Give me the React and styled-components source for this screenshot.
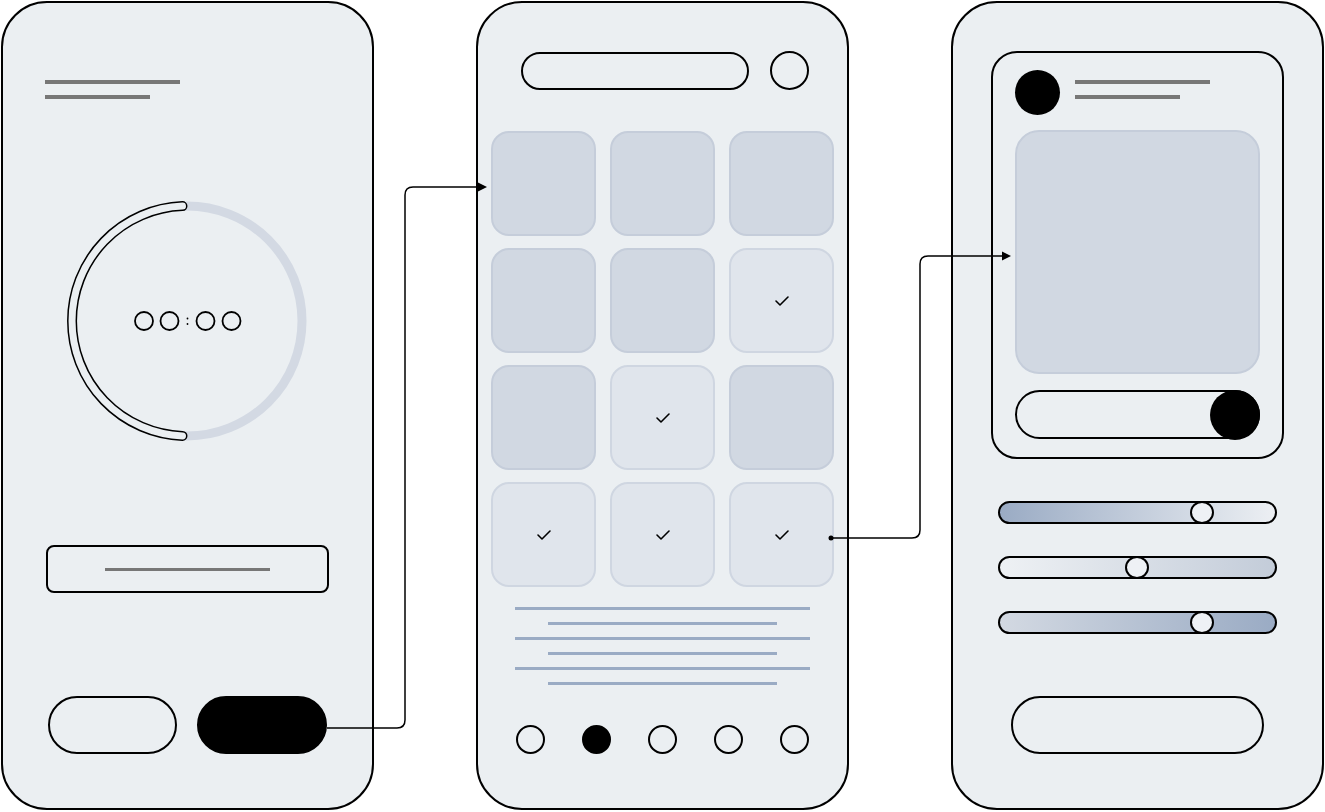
import React from "react";
import styled, { createGlobalStyle } from "styled-components";

const Global = createGlobalStyle`
  html, body { margin: 0; padding: 0; background: #ffffff; }
  body { font-family: "Liberation Sans", Arial, sans-serif; }
  * { box-sizing: border-box; }
`;

const BG = "#ebeff2";
const TILE = "#d1d8e2";
const TILE_BORDER = "#c5cdda";
const TILE_LIGHT = "#e0e5ec";
const TILE_LIGHT_BORDER = "#cfd6e1";
const GREY = "#777777";
const BLUE = "#9aabc4";

const Canvas = styled.div`
  position: relative;
  display: flex;
  gap: 102px;
  padding: 1px;
  width: 1325px;
  height: 812px;
`;

const Phone = styled.div`
  width: 373px;
  height: 809px;
  border: 2px solid #000;
  border-radius: 46px;
  background: ${BG};
  display: flex;
  flex-direction: column;
  align-items: center;
`;

/* ---------- phone 1 ---------- */
const Header = styled.div`
  align-self: stretch;
  display: flex;
  flex-direction: column;
  gap: 11px;
  margin-top: ${(p) => p.$top}px;
  padding-left: ${(p) => p.$left}px;
`;

const Bar = styled.div`
  width: ${(p) => p.$w}px;
  height: ${(p) => p.$h || 4}px;
  background: ${(p) => p.$color || GREY};
`;

const Dial = styled.svg`
  display: block;
  margin-top: 102px;
  margin-right: 1px;
  width: 240px;
  height: 240px;
`;

const InputBox = styled.div`
  margin-top: 104px;
  width: 283px;
  height: 48px;
  border: 2px solid #000;
  border-radius: 8px;
  display: flex;
  align-items: center;
  justify-content: center;
`;

const ButtonRow = styled.div`
  margin-top: 103px;
  display: flex;
  gap: 20px;
`;

const PillButton = styled.div`
  width: ${(p) => p.$w}px;
  height: 58px;
  border-radius: 29px;
  border: 2px solid #000;
  background: ${(p) => (p.$filled ? "#000" : "transparent")};
`;

/* ---------- phone 2 ---------- */
const SearchRow = styled.div`
  align-self: stretch;
  margin-top: 48px;
  padding-left: 43px;
  display: flex;
  align-items: center;
  gap: 21px;
`;

const SearchPill = styled.div`
  width: 228px;
  height: 38px;
  border: 2px solid #000;
  border-radius: 19px;
`;

const RoundButton = styled.div`
  width: 39px;
  height: 39px;
  border: 2px solid #000;
  border-radius: 50%;
`;

const Grid = styled.div`
  margin-top: 41px;
  display: grid;
  grid-template-columns: repeat(3, 105px);
  grid-auto-rows: 105px;
  column-gap: 14px;
  row-gap: 12px;
`;

const Tile = styled.div`
  border-radius: 18px;
  border: 2px solid ${(p) => (p.$checked ? TILE_LIGHT_BORDER : TILE_BORDER)};
  background: ${(p) => (p.$checked ? TILE_LIGHT : TILE)};
  display: flex;
  align-items: center;
  justify-content: center;
`;

const Lines = styled.div`
  margin-top: 20px;
  display: flex;
  flex-direction: column;
  align-items: center;
  gap: 12px;
`;

const Dots = styled.div`
  margin-top: 40px;
  display: flex;
  gap: 37px;
`;

const Dot = styled.div`
  width: 29px;
  height: 29px;
  border-radius: 50%;
  border: 2px solid #000;
  background: ${(p) => (p.$active ? "#000" : "transparent")};
`;

/* ---------- phone 3 ---------- */
const Card = styled.div`
  margin-top: 48px;
  width: 293px;
  height: 408px;
  border: 2px solid #000;
  border-radius: 26px;
  padding: 17px 22px 0 22px;
  display: flex;
  flex-direction: column;
`;

const Profile = styled.div`
  display: flex;
  gap: 15px;
`;

const Avatar = styled.div`
  width: 45px;
  height: 45px;
  border-radius: 50%;
  background: #000;
`;

const ProfileLines = styled.div`
  margin-top: 10px;
  display: flex;
  flex-direction: column;
  gap: 11px;
`;

const ImageBox = styled.div`
  margin-top: 15px;
  width: 245px;
  height: 244px;
  border-radius: 24px;
  border: 2px solid ${TILE_BORDER};
  background: ${TILE};
`;

const Toggle = styled.div`
  margin-top: 16px;
  width: 245px;
  height: 49px;
  border: 2px solid #000;
  border-radius: 25px;
  display: flex;
  justify-content: flex-end;
  align-items: center;
`;

const ToggleKnob = styled.div`
  width: 50px;
  height: 50px;
  margin-right: -2px;
  border-radius: 50%;
  background: #000;
`;

const Sliders = styled.div`
  margin-top: 42px;
  display: flex;
  flex-direction: column;
  gap: 32px;
`;

const Track = styled.div`
  position: relative;
  width: 279px;
  height: 23px;
  border: 2px solid #000;
  border-radius: 12px;
  background: linear-gradient(to right, ${(p) => p.$from}, ${(p) => p.$to});
`;

const Knob = styled.div`
  position: absolute;
  top: -2px;
  width: 24px;
  height: 23px;
  margin-left: -12px;
  border: 2px solid #000;
  border-radius: 50%;
  background: #eef1f5;
`;

const WideButton = styled.div`
  margin-top: 62px;
  width: 253px;
  height: 58px;
  border: 2px solid #000;
  border-radius: 29px;
`;

/* ---------- overlay connectors ---------- */
const Overlay = styled.svg`
  position: absolute;
  left: 0;
  top: 0;
  width: 1325px;
  height: 812px;
  pointer-events: none;
`;

const Check = () => (
  <svg width="16" height="12" viewBox="0 0 16 12">
    <path d="M2 6 L6 10 L14 2" fill="none" stroke="#000" strokeWidth="1.6" strokeLinecap="round" strokeLinejoin="round" />
  </svg>
);

const tiles = [false, false, false, false, false, true, false, true, false, true, true, true];

const Slider = ({ from, to, pos }) => (
  <Track $from={from} $to={to}>
    <Knob style={{ left: `${pos}%` }} />
  </Track>
);

const ARC = "M115.5 5.09 A115 115 0 0 0 115.5 234.91";

export default function App() {
  return (
    <>
      <Global />
      <Canvas>
        <Phone>
          <Header $top={77} $left={42}>
            <Bar $w={135} />
            <Bar $w={105} />
          </Header>
          <Dial viewBox="0 0 240 240">
            <circle cx="120" cy="120" r="115" fill="none" stroke="#d3d9e3" strokeWidth="9" />
            <path d={ARC} fill="none" stroke="#000" strokeWidth="10" strokeLinecap="round" />
            <path d={ARC} fill="none" stroke={BG} strokeWidth="7" strokeLinecap="round" />
            <circle cx="77" cy="120" r="9" fill="none" stroke="#000" strokeWidth="1.8" />
            <circle cx="102.5" cy="120" r="9" fill="none" stroke="#000" strokeWidth="1.8" />
            <circle cx="120.5" cy="117.5" r="0.9" fill="#000" />
            <circle cx="120.5" cy="123" r="0.9" fill="#000" />
            <circle cx="138.5" cy="120" r="9" fill="none" stroke="#000" strokeWidth="1.8" />
            <circle cx="164.5" cy="120" r="9" fill="none" stroke="#000" strokeWidth="1.8" />
          </Dial>
          <InputBox>
            <Bar $w={165} $h={3} />
          </InputBox>
          <ButtonRow>
            <PillButton $w={129} />
            <PillButton $w={130} $filled />
          </ButtonRow>
        </Phone>

        <Phone>
          <SearchRow>
            <SearchPill />
            <RoundButton />
          </SearchRow>
          <Grid>
            {tiles.map((c, i) => (
              <Tile key={i} $checked={c}>
                {c && <Check />}
              </Tile>
            ))}
          </Grid>
          <Lines>
            {[0, 1, 2].map((i) => (
              <React.Fragment key={i}>
                <Bar $w={295} $h={3} $color={BLUE} />
                <Bar $w={229} $h={3} $color={BLUE} />
              </React.Fragment>
            ))}
          </Lines>
          <Dots>
            {[0, 1, 2, 3, 4].map((i) => (
              <Dot key={i} $active={i === 1} />
            ))}
          </Dots>
        </Phone>

        <Phone>
          <Card>
            <Profile>
              <Avatar />
              <ProfileLines>
                <Bar $w={135} />
                <Bar $w={105} />
              </ProfileLines>
            </Profile>
            <ImageBox />
            <Toggle>
              <ToggleKnob />
            </Toggle>
          </Card>
          <Sliders>
            <Slider from="#9aabc4" to="#eceff3" pos={73.5} />
            <Slider from="#eef1f4" to="#c3ccd9" pos={49.8} />
            <Slider from="#d3d9e2" to="#9aabc4" pos={73.5} />
          </Sliders>
          <WideButton />
        </Phone>

        <Overlay viewBox="0 0 1325 812">
          <path d="M327 728 H397 Q405 728 405 720 V195 Q405 187 413 187 H480" fill="none" stroke="#000" strokeWidth="1.5" />
          <polygon points="487,187 478,182.5 478,191.5" fill="#000" />
          <circle cx="831" cy="538" r="2.5" fill="#000" />
          <path d="M831 538 H912 Q920 538 920 530 V264 Q920 256 928 256 H1004" fill="none" stroke="#000" strokeWidth="1.5" />
          <polygon points="1011,256 1002,251.5 1002,260.5" fill="#000" />
        </Overlay>
      </Canvas>
    </>
  );
}
